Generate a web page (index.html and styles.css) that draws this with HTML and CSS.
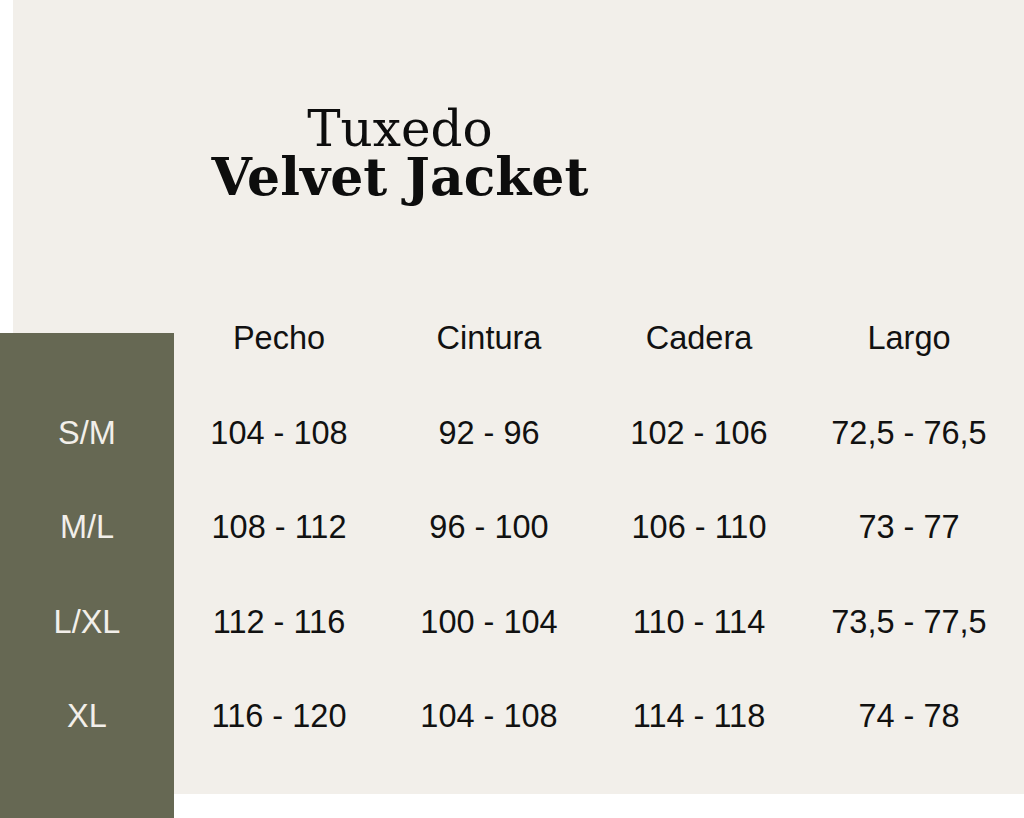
FILE: index.html
```html
<!DOCTYPE html>
<html lang="es">
<head>
<meta charset="utf-8">
<title>Tuxedo Velvet Jacket</title>
<link rel="stylesheet" href="styles.css">
</head>
<body>
<div class="panel">
  <div class="title">
    <div class="title-light">Tuxedo</div>
    <div class="title-bold">Velvet Jacket</div>
  </div>
  <div class="chart">
    <div class="side"></div>
    <div class="cell head c2">Pecho</div>
    <div class="cell head c3">Cintura</div>
    <div class="cell head c4">Cadera</div>
    <div class="cell head c5">Largo</div>

    <div class="cell size r2">S/M</div>
    <div class="cell">104 - 108</div>
    <div class="cell">92 - 96</div>
    <div class="cell">102 - 106</div>
    <div class="cell">72,5 - 76,5</div>

    <div class="cell size r3">M/L</div>
    <div class="cell">108 - 112</div>
    <div class="cell">96 - 100</div>
    <div class="cell">106 - 110</div>
    <div class="cell">73 - 77</div>

    <div class="cell size r4">L/XL</div>
    <div class="cell">112 - 116</div>
    <div class="cell">100 - 104</div>
    <div class="cell">110 - 114</div>
    <div class="cell">73,5 - 77,5</div>

    <div class="cell size r5">XL</div>
    <div class="cell">116 - 120</div>
    <div class="cell">104 - 108</div>
    <div class="cell">114 - 118</div>
    <div class="cell">74 - 78</div>
  </div>
</div>
</body>
</html>
```
FILE: styles.css
```css
html, body {
  margin: 0;
  padding: 0;
  background: #ffffff;
  overflow: hidden;
}
body {
  width: 1024px;
  height: 818px;
  font-family: "Liberation Sans", Arial, sans-serif;
}
.panel {
  margin-left: 13px;
  height: 794px;
  background: #f2efea;
  padding-top: 105px;
  box-sizing: border-box;
}
.title {
  width: 600px;
  margin-left: 87px;
  text-align: center;
  font-family: "DejaVu Serif", "Liberation Serif", serif;
  color: #0d0d0d;
}
.title-light {
  font-size: 50px;
  line-height: 48px;
  font-weight: 400;
}
.title-bold {
  font-size: 52px;
  line-height: 48px;
  font-weight: 700;
}
.chart {
  margin-top: 90.5px;
  margin-left: -13px;
  display: grid;
  grid-template-columns: 174px repeat(4, 210px);
  grid-template-rows: repeat(5, 94.5px);
}
.side {
  grid-column: 1;
  grid-row: 1 / -1;
  margin-top: 41.5px;
  margin-bottom: -60px;
  background: #666853;
}
.cell {
  display: flex;
  align-items: center;
  justify-content: center;
  font-size: 32.5px;
  color: #111111;
  white-space: nowrap;
}
.head { grid-row: 1; }
.c2 { grid-column: 2; }
.c3 { grid-column: 3; }
.c4 { grid-column: 4; }
.c5 { grid-column: 5; }
.size {
  grid-column: 1;
  color: #f2efea;
  position: relative;
}
.r2 { grid-row: 2; }
.r3 { grid-row: 3; }
.r4 { grid-row: 4; }
.r5 { grid-row: 5; }
```
